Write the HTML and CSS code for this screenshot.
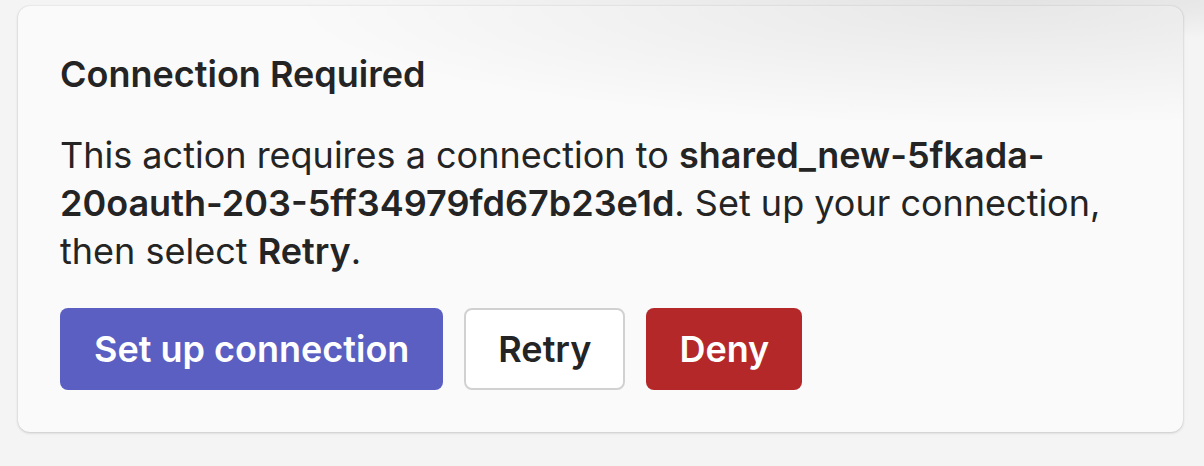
FILE: index.html
```html
<!DOCTYPE html>
<html lang="en">
<head>
<meta charset="utf-8">
<title>Connection Required</title>
<link rel="stylesheet" href="styles.css">
</head>
<body>
  <div class="card">
    <h2 class="title">Connection Required</h2>
    <p class="message">This action requires a connection to <strong>shared_new-5fkada-20oauth-203-5ff34979fd67b23e1d</strong>. Set up your connection, then select <strong>Retry</strong>.</p>
    <div class="actions">
      <button class="btn btn-primary" type="button">Set up connection</button>
      <button class="btn btn-secondary" type="button">Retry</button>
      <button class="btn btn-danger" type="button">Deny</button>
    </div>
  </div>
</body>
</html>
```

FILE: styles.css
```css
html, body {
  margin: 0;
  padding: 0;
}

body {
  min-height: 466px;
  box-sizing: border-box;
  background-color: #f4f4f4;
  background-image: radial-gradient(ellipse 650px 40px at 85% 0%, rgba(0, 0, 0, 0.07), rgba(0, 0, 0, 0) 100%);
  background-repeat: no-repeat;
  padding: 6px 21px 0 18px;
  font-family: Inter, "Noto Sans", "Liberation Sans", sans-serif;
  color: #242424;
}

.card {
  box-sizing: border-box;
  width: 1165px;
  height: 426px;
  padding: 42px;
  border-radius: 12px;
  background-color: #fafafa;
  background-image: radial-gradient(ellipse 720px 120px at 85% 0%, rgba(0, 0, 0, 0.075), rgba(0, 0, 0, 0) 100%);
  background-repeat: no-repeat;
  box-shadow: 0 1px 3px rgba(0, 0, 0, 0.16), 0 0 2px rgba(0, 0, 0, 0.1);
}

.title {
  margin: 0;
  font-size: 36px;
  line-height: 52px;
  font-weight: 600;
}

.message {
  margin: 31px 0 0;
  font-size: 36px;
  line-height: 48px;
  font-weight: 400;
}

.message strong {
  font-weight: 600;
}

.actions {
  display: flex;
  gap: 21px;
  margin-top: 33px;
}

.btn {
  font-family: inherit;
  font-size: 36px;
  line-height: 48px;
  font-weight: 600;
  padding: 15px 32px;
  border: 2px solid transparent;
  border-radius: 8px;
  cursor: pointer;
}

.btn-primary {
  background: #5b5fc2;
  color: #ffffff;
}

.btn-secondary {
  background: #ffffff;
  color: #242424;
  border-color: #d1d1d1;
}

.btn-danger {
  background: #b4282a;
  color: #ffffff;
  padding-left: 31px;
  padding-right: 31px;
}
```
